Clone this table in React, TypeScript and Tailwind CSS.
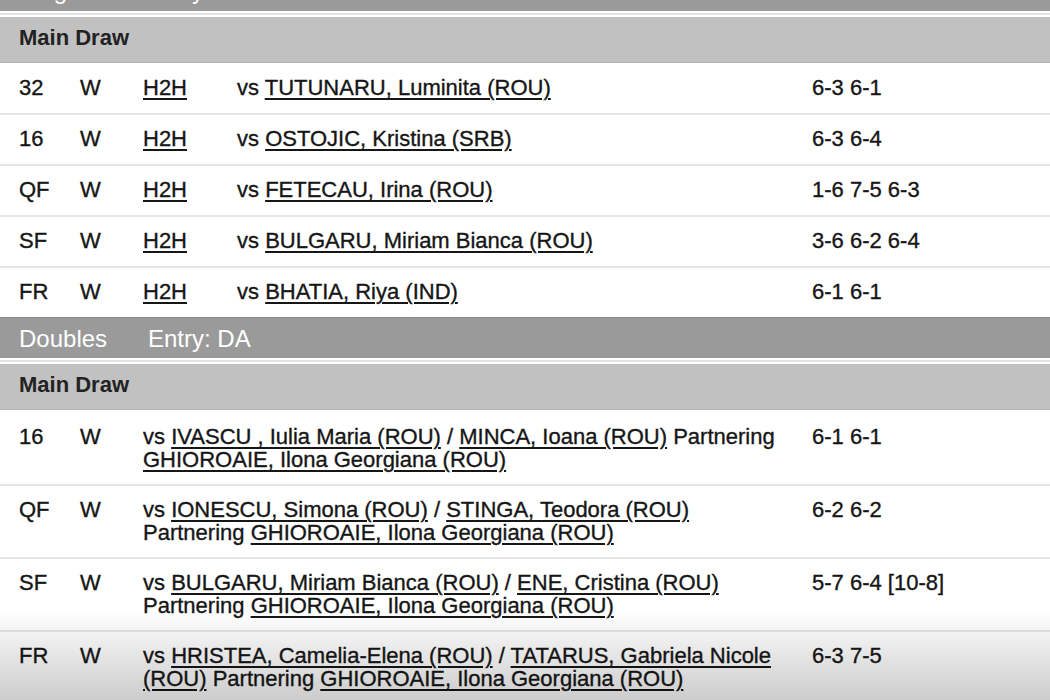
import React from "react";

type Singles = { round: string; opp: string; score: string };
type Doubles = { round: string; line1: React.ReactNode; line2: React.ReactNode; score: string };

const singles: Singles[] = [
  { round: "32", opp: "TUTUNARU, Luminita (ROU)", score: "6-3 6-1" },
  { round: "16", opp: "OSTOJIC, Kristina (SRB)", score: "6-3 6-4" },
  { round: "QF", opp: "FETECAU, Irina (ROU)", score: "1-6 7-5 6-3" },
  { round: "SF", opp: "BULGARU, Miriam Bianca (ROU)", score: "3-6 6-2 6-4" },
  { round: "FR", opp: "BHATIA, Riya (IND)", score: "6-1 6-1" },
];

const L = ({ children }: { children: React.ReactNode }) => (
  <a className="underline decoration-[1.5px] underline-offset-[3px] cursor-pointer">{children}</a>
);

const partner = <L>GHIOROAIE, Ilona Georgiana (ROU)</L>;

const doubles: Doubles[] = [
  {
    round: "16",
    line1: (
      <>
        vs <L>IVASCU , Iulia Maria (ROU)</L> / <L>MINCA, Ioana (ROU)</L> Partnering
      </>
    ),
    line2: partner,
    score: "6-1 6-1",
  },
  {
    round: "QF",
    line1: (
      <>
        vs <L>IONESCU, Simona (ROU)</L> / <L>STINGA, Teodora (ROU)</L>
      </>
    ),
    line2: <>Partnering {partner}</>,
    score: "6-2 6-2",
  },
  {
    round: "SF",
    line1: (
      <>
        vs <L>BULGARU, Miriam Bianca (ROU)</L> / <L>ENE, Cristina (ROU)</L>
      </>
    ),
    line2: <>Partnering {partner}</>,
    score: "5-7 6-4 [10-8]",
  },
  {
    round: "FR",
    line1: (
      <>
        vs <L>HRISTEA, Camelia-Elena (ROU)</L> / <L>TATARUS, Gabriela Nicole</L>
      </>
    ),
    line2: (
      <>
        <L>(ROU)</L> Partnering {partner}
      </>
    ),
    score: "6-3 7-5",
  },
];

function SectionBar({ left, right, className = "" }: { left: string; right: string; className?: string }) {
  return (
    <div
      className={`flex h-[41px] items-center bg-[#9a9a9a] border-t border-[#8e8e8e] text-[24px] text-white ${className}`}
    >
      <div className="w-[148px] pl-[19px]">{left}</div>
      <div>{right}</div>
    </div>
  );
}

function Spacer() {
  return (
    <div className="flex flex-col">
      <div className="h-[2px] bg-white" />
      <div className="h-[2px] bg-[#e2e2e2]" />
      <div className="h-[2px] bg-white" />
    </div>
  );
}

function MainDraw() {
  return (
    <div className="flex h-[46px] items-center bg-[#c1c1c1] border-b border-[#b3b3b3] pl-[19px] pb-[5px] font-bold text-[#222]">
      Main Draw
    </div>
  );
}

export default function App() {
  return (
    <div
      className="relative h-[700px] w-[1050px] overflow-hidden bg-white text-[22px] leading-[23px] text-[#161616]"
      style={{ fontFamily: '"Liberation Sans", Arial, sans-serif' }}
    >
      <div className="h-[11px] overflow-hidden">
        <SectionBar left="Singles" right="Entry: DA" className="-mt-[30px] border-t-0" />
      </div>
      <Spacer />
      <MainDraw />
      <div className="[-webkit-text-stroke:0.35px_#161616]">
        {singles.map((r, i) => (
          <div
            key={r.round}
            className={`flex items-center ${i === 0 ? "pt-[13px]" : "pt-[12px] border-t-2 border-[#e6e6e6]"} pb-[14px]`}
          >
            <div className="w-[80px] pl-[19px]">{r.round}</div>
            <div className="w-[63px]">W</div>
            <div className="w-[94px]">
              <L>H2H</L>
            </div>
            <div className="w-[575px]">
              vs <L>{r.opp}</L>
            </div>
            <div>{r.score}</div>
          </div>
        ))}
      </div>
      <SectionBar left="Doubles" right="Entry: DA" />
      <Spacer />
      <MainDraw />
      <div className="[-webkit-text-stroke:0.35px_#161616]">
        {doubles.map((r, i) => (
          <div
            key={r.round}
            className={`flex items-start ${i === 0 ? "pt-[15px]" : "pt-[12px] border-t-2 border-[#e6e6e6]"} pb-[13px]`}
          >
            <div className="w-[80px] pl-[19px]">{r.round}</div>
            <div className="w-[63px]">W</div>
            <div className="w-[669px]">
              <div className="whitespace-nowrap">{r.line1}</div>
              <div className="whitespace-nowrap">{r.line2}</div>
            </div>
            <div>{r.score}</div>
          </div>
        ))}
      </div>
      <div className="pointer-events-none absolute bottom-0 left-0 h-[90px] w-full bg-gradient-to-b from-transparent to-[rgba(0,0,0,0.2)]" />
    </div>
  );
}
